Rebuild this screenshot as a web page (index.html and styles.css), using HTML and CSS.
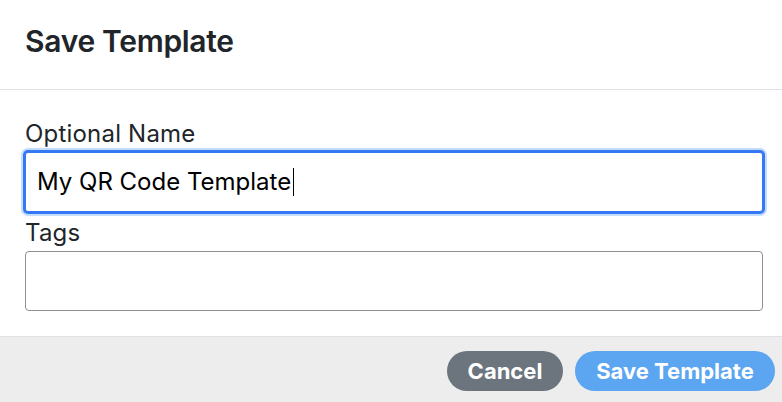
FILE: index.html
```html
<!DOCTYPE html>
<html lang="en">
<head>
<meta charset="utf-8">
<title>Save Template</title>
<link rel="stylesheet" href="styles.css">
</head>
<body>
<div class="modal">
  <header class="modal-header">
    <h5 class="modal-title">Save Template</h5>
  </header>
  <div class="modal-body">
    <label class="field-label" for="name">Optional Name</label>
    <div class="input input-focus"><span class="input-text">My QR Code Template</span><span class="caret"></span></div>
    <label class="field-label" for="tags">Tags</label>
    <div class="input"></div>
  </div>
  <footer class="modal-footer">
    <button class="btn btn-cancel" type="button">Cancel</button>
    <button class="btn btn-save" type="button">Save Template</button>
  </footer>
</div>
</body>
</html>
```
FILE: styles.css
```css
html, body {
  margin: 0;
  padding: 0;
  background: #ffffff;
}
body {
  font-family: Inter, "Liberation Sans", Arial, sans-serif;
  color: #212529;
  width: 782px;
  height: 402px;
  overflow: hidden;
}
.modal {
  display: flex;
  flex-direction: column;
  height: 402px;
}
.modal-header {
  height: 89px;
  border-bottom: 1px solid #dee2e6;
  padding: 0 25px;
  display: flex;
  align-items: flex-start;
  box-sizing: content-box;
}
.modal-title {
  margin: 0;
  padding-top: 22px;
  font-size: 30px;
  line-height: 38px;
  font-weight: 600;
  letter-spacing: -0.3px;
}
.modal-body {
  flex: 1;
  padding: 29px 19px 0 25px;
  display: flex;
  flex-direction: column;
}
.field-label {
  font-size: 24px;
  line-height: 30px;
  margin-bottom: 3px;
  letter-spacing: 0.2px;
  display: block;
}
.input {
  box-sizing: border-box;
  height: 60px;
  width: 738px;
  border: 1px solid #8e8e93;
  border-radius: 4px;
  margin-bottom: 6px;
  background: #fff;
  display: flex;
  align-items: center;
  padding-left: 11px;
}
.input-focus {
  border-color: #3478f6;
  border-radius: 3px;
  box-shadow: 0 0 0 2px #3478f6, 0 0 0 4px #c5dcfb;
}
.input-text {
  font-size: 24px;
  color: #000;
  line-height: 30px;
}
.caret {
  display: inline-block;
  width: 1px;
  height: 28px;
  background: #000;
  margin-left: 2px;
}
.modal-footer {
  height: 66px;
  border-top: 1px solid #dee2e6;
  background: #ededed;
  display: flex;
  justify-content: flex-end;
  align-items: flex-start;
  gap: 12px;
  padding: 14px 7px 0 0;
  box-sizing: border-box;
}
.btn {
  height: 40px;
  border: none;
  border-radius: 20px;
  color: #fff;
  font-family: Inter, "Liberation Sans", Arial, sans-serif;
  font-weight: 700;
  font-size: 22px;
  padding: 0;
  display: flex;
  align-items: center;
  justify-content: center;
}
.btn-cancel {
  width: 116px;
  background: #6c757d;
}
.btn-save {
  width: 200px;
  background: #5ba5f1;
}
```
